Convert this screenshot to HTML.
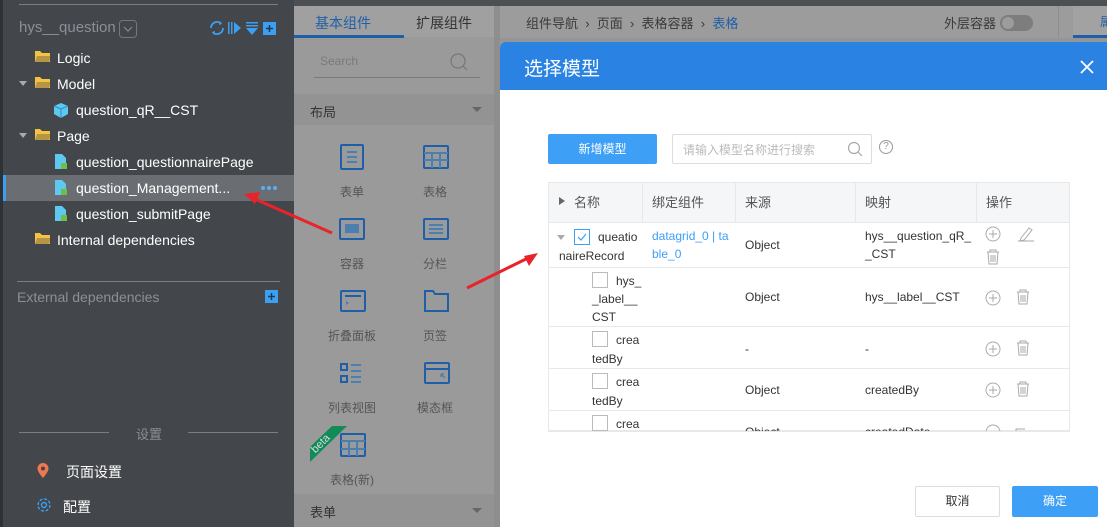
<!DOCTYPE html>
<html><head><meta charset="utf-8"><style>
*{margin:0;padding:0;box-sizing:border-box}
body{width:1107px;height:527px;overflow:hidden;position:relative;font-family:"Liberation Sans","Noto Sans CJK SC",sans-serif;background:#9a9a9a}
.a{position:absolute}
.sb{left:0;top:0;width:294px;height:527px;background:#43464a}
.t{color:#fff;font-size:14px;white-space:nowrap}
.cn{font-family:"Liberation Sans","Noto Sans CJK SC",sans-serif}
.g{color:#555;font-size:12px;white-space:nowrap}
.cell{font-size:12px;color:#333;white-space:nowrap;line-height:18px}
.cb{width:16px;height:16px;border:1px solid #bbb;background:#fff}
.hl{height:1px;background:#e8e8e8}
.vl{width:1px;background:#e8e8e8}
.tri{width:0;height:0;border-left:5px solid transparent;border-right:5px solid transparent;border-top:5px solid #666}
</style></head><body>
<div class="a sb"></div>
<div class="a" style="left:0;top:0;width:3px;height:527px;background:#2f3235"></div>
<div class="a" style="left:19px;top:4px;width:259px;height:1px;background:#7a7e83"></div>
<div class="a t" style="left:19px;top:19px;color:#8a9099;font-size:15px">hys__question</div>
<svg class="a" style="left:119px;top:20px" width="18" height="18"><rect x=".5" y=".5" width="17" height="17" rx="3" fill="none" stroke="#777"/><path d="M5 7l4 4 4-4" fill="none" stroke="#888" stroke-width="1.2"/></svg>
<svg class="a" style="left:208px;top:19px" width="70" height="18" viewBox="0 0 70 18">
<g fill="none" stroke="#3d9ff0" stroke-width="1.8"><path d="M3 9a6 6 0 0 1 10-4.5M15 9a6 6 0 0 1-10 4.5"/></g>
<path d="M12 2l2 3-3 1zM6 16l-2-3 3-1z" fill="#3d9ff0"/>
<rect x="20" y="3" width="1.5" height="12" fill="#3d9ff0"/><rect x="23" y="3" width="1.5" height="12" fill="#3d9ff0"/><path d="M26 3l7 6-7 6z" fill="#3d9ff0"/>
<rect x="38" y="3" width="12" height="1.5" fill="#3d9ff0"/><rect x="38" y="6" width="12" height="1.5" fill="#3d9ff0"/><path d="M38 9h12l-6 7z" fill="#3d9ff0"/>
<rect x="55" y="3" width="13" height="13" fill="#3d9ff0"/><path d="M61.5 6v7M58 9.5h7" stroke="#1b3a5a" stroke-width="1.5"/></svg>
<svg class="a" style="left:0;top:0" width="294" height="260">
<g fill="#f5c242"><path d="M35 51h5l2 2h8v9H35z"/><path d="M35 77h5l2 2h8v9H35z"/><path d="M35 129h5l2 2h8v9H35z"/><path d="M35 233h5l2 2h8v9H35z"/></g>
<g fill="#43464a" opacity=".35"><path d="M37 56h14l-2 6H35z"/><path d="M37 82h14l-2 6H35z"/><path d="M37 134h14l-2 6H35z"/><path d="M37 238h14l-2 6H35z"/></g>
<path d="M19 81h8l-4 5zM19 133h8l-4 5z" fill="#aaa"/>
<path d="M54 106l7-3 7 3v8l-7 4-7-4z" fill="#5ec8f0"/><path d="M54 106l7 3 7-3M61 109v9" stroke="#2c8cc0" fill="none"/>
<g fill="#5ec8f0"><path d="M55 154h7l4 4v11H55z"/><path d="M55 206h7l4 4v11H55z"/></g>
<g fill="#6cc04a"><rect x="61" y="163" width="6" height="6"/><rect x="61" y="215" width="6" height="6"/></g>
</svg>
<div class="a t" style="left:57px;top:50px">Logic</div>
<div class="a t" style="left:57px;top:76px">Model</div>
<div class="a t" style="left:76px;top:102px">question_qR__CST</div>
<div class="a t" style="left:57px;top:128px">Page</div>
<div class="a t" style="left:76px;top:154px">question_questionnairePage</div>
<div class="a" style="left:3px;top:175px;width:291px;height:26px;background:#6a6e73"></div>
<div class="a" style="left:3px;top:175px;width:3px;height:26px;background:#3d9ff0"></div>
<svg class="a" style="left:0;top:175px" width="80" height="26"><path d="M55 5h7l4 4v11H55z" fill="#5ec8f0"/><rect x="61" y="14" width="6" height="6" fill="#6cc04a"/></svg>
<div class="a t" style="left:76px;top:180px">question_Management...</div>
<svg class="a" style="left:260px;top:185px" width="20" height="6"><circle cx="3" cy="3" r="2" fill="#5aaef5"/><circle cx="9" cy="3" r="2" fill="#5aaef5"/><circle cx="15" cy="3" r="2" fill="#5aaef5"/></svg>
<div class="a t" style="left:76px;top:206px">question_submitPage</div>
<div class="a t" style="left:57px;top:232px">Internal dependencies</div>
<div class="a" style="left:17px;top:281px;width:263px;height:1px;background:#7a7e83"></div>
<div class="a t" style="left:17px;top:289px;color:#8a9099">External dependencies</div>
<div class="a" style="left:265px;top:290px;width:13px;height:13px;background:#3d9ff0"></div>
<svg class="a" style="left:265px;top:290px" width="13" height="13"><path d="M6.5 3v7M3 6.5h7" stroke="#1b3a5a" stroke-width="1.5"/></svg>
<div class="a" style="left:19px;top:432px;width:90px;height:1px;background:#7a7e83"></div>
<div class="a" style="left:188px;top:432px;width:90px;height:1px;background:#7a7e83"></div>
<div class="a t" style="left:136px;top:424px;color:#8a9099;font-size:13px">设置</div>
<svg class="a" style="left:36px;top:462px" width="14" height="18"><path d="M7 1a5.5 5.5 0 0 1 5.5 5.5C12.5 10 7 16 7 16S1.5 10 1.5 6.5A5.5 5.5 0 0 1 7 1z" fill="#f07850"/><circle cx="7" cy="6.5" r="2" fill="#43464a"/></svg>
<div class="a t" style="left:66px;top:462px">页面设置</div>
<svg class="a" style="left:36px;top:497px" width="16" height="16"><circle cx="8" cy="8" r="2.5" fill="none" stroke="#3d9ff0" stroke-width="1.4"/><circle cx="8" cy="8" r="6" fill="none" stroke="#3d9ff0" stroke-width="1.4" stroke-dasharray="3 1.7"/></svg>
<div class="a t" style="left:63px;top:497px">配置</div>

<div class="a" style="left:294px;top:0;width:206px;height:6px;background:#4c4f53"></div>
<div class="a" style="left:294px;top:6px;width:200px;height:31px;background:#a0a0a0"></div>
<div class="a cn" style="left:315px;top:13px;font-size:14px;color:#1f5fa8">基本组件</div>
<div class="a cn" style="left:416px;top:13px;font-size:14px;color:#333">扩展组件</div>
<div class="a" style="left:294px;top:35px;width:110px;height:3px;background:#1f5fa8"></div>
<div class="a" style="left:494px;top:6px;width:6px;height:521px;background:#8e8e8e"></div>
<div class="a" style="left:320px;top:54px;font-size:12px;color:#7a7a7a">Search</div>
<div class="a" style="left:314px;top:77px;width:166px;height:1px;background:#7a7a7a"></div>
<svg class="a" style="left:448px;top:51px" width="30" height="24"><circle cx="10" cy="10" r="7" fill="none" stroke="#777" stroke-width="1.2"/><path d="M15 15l4 4" stroke="#777" stroke-width="1.2"/></svg>
<div class="a" style="left:294px;top:94px;width:200px;height:31px;background:#939393"></div>
<div class="a cn" style="left:310px;top:102px;font-size:13px;color:#333">布局</div>
<div class="a tri" style="left:472px;top:107px"></div>
<svg class="a" style="left:294px;top:125px" width="200" height="340" fill="none" stroke="#1f5fa8" stroke-width="2">
<rect x="47" y="20" width="22" height="24" rx="1"/><path d="M53 27h10M53 32h10M53 37h10" stroke="#4a7fb0"/>
<rect x="130" y="21" width="24" height="22" rx="1"/><path d="M130 28h24M130 35h24M138 28v15M146 28v15" stroke="#4a7fb0"/>
<rect x="46" y="94" width="24" height="20" rx="1"/><rect x="51" y="99" width="14" height="9" fill="#4a7fb0" stroke="none"/>
<rect x="130" y="94" width="24" height="20" rx="1"/><path d="M135 100h14M135 104h14M135 108h14" stroke="#4a7fb0"/>
<rect x="47" y="166" width="24" height="20" rx="1"/><path d="M51 171h16"/><path d="M52 176l3 2-3 2z" fill="#4a7fb0" stroke="none"/>
<path d="M131 166h8l2 3h13v17h-23z"/>
<rect x="47" y="239" width="6" height="6"/><rect x="47" y="251" width="6" height="6"/><path d="M57 240h10M57 246h10M57 252h10M57 257h10" stroke="#4a7fb0"/>
<rect x="131" y="238" width="24" height="20" rx="1"/><path d="M131 244h24"/><path d="M147 249l4 4M147 249h3M147 249v3" stroke="#4a7fb0" stroke-width="1.5"/>
<rect x="47" y="309" width="24" height="22" rx="1"/><path d="M47 316h24M47 324h24M55 316v15M63 316v15" stroke="#4a7fb0"/>
</svg>
<div class="a cn g" style="left:340px;top:183px">表单</div>
<div class="a cn g" style="left:423px;top:183px">表格</div>
<div class="a cn g" style="left:340px;top:255px">容器</div>
<div class="a cn g" style="left:423px;top:255px">分栏</div>
<div class="a cn g" style="left:328px;top:327px">折叠面板</div>
<div class="a cn g" style="left:423px;top:327px">页签</div>
<div class="a cn g" style="left:328px;top:399px">列表视图</div>
<div class="a cn g" style="left:417px;top:399px">模态框</div>
<svg class="a" style="left:310px;top:425px" width="40" height="40"><path d="M0 37L0 22 22 1 37 1z" fill="#128a5a"/><text x="13" y="21" text-anchor="middle" transform="rotate(-45 13 21)" fill="#ddd" font-size="11" font-family="Liberation Sans">beta</text></svg>
<div class="a cn g" style="left:330px;top:471px">表格(新)</div>
<div class="a" style="left:294px;top:494px;width:200px;height:33px;background:#939393"></div>
<div class="a cn" style="left:310px;top:502px;font-size:13px;color:#333">表单</div>
<div class="a tri" style="left:472px;top:508px"></div>

<div class="a" style="left:500px;top:0;width:607px;height:6px;background:#4c4f53"></div>
<div class="a" style="left:500px;top:6px;width:607px;height:32px;background:#9c9c9c"></div>
<div class="a" style="left:500px;top:38px;width:607px;height:4px;background:#959595"></div>
<div class="a cn" style="left:526px;top:13px;font-size:13px;color:#3a3a3a;white-space:nowrap">组件导航 &nbsp;›&nbsp; 页面 &nbsp;›&nbsp; 表格容器 &nbsp;›&nbsp; <span style="color:#1f5fa8">表格</span></div>
<div class="a cn" style="left:944px;top:13px;font-size:13px;color:#3a3a3a">外层容器</div>
<div class="a" style="left:1000px;top:15px;width:33px;height:16px;border-radius:8px;background:#7d7d7d"></div>
<div class="a" style="left:1002px;top:17px;width:12px;height:12px;border-radius:6px;background:#9c9c9c"></div>
<div class="a" style="left:1058px;top:6px;width:1px;height:32px;background:#8e8e8e"></div>
<div class="a" style="left:1073px;top:6px;width:34px;height:32px;background:#a2a2a2"></div>
<div class="a" style="left:1073px;top:35px;width:34px;height:3px;background:#1f5fa8"></div>
<div class="a cn" style="left:1100px;top:13px;font-size:12px;color:#1f5fa8">属</div>

<div class="a" style="left:500px;top:42px;width:607px;height:485px;background:#fff;border-top-left-radius:5px;overflow:hidden">
 <div class="a" style="left:0;top:0;width:607px;height:48px;background:#2a83e2"></div>
 <div class="a cn" style="left:24px;top:12px;font-size:19px;color:#fff">选择模型</div>
 <svg class="a" style="left:580px;top:18px" width="14" height="14"><path d="M1 1l12 12M13 1L1 13" stroke="#fff" stroke-width="1.8"/></svg>
</div>
<div class="a cn" style="left:548px;top:134px;width:109px;height:30px;background:#3d9ff5;border-radius:2px;color:#fff;font-size:12px;text-align:center;line-height:30px">新增模型</div>
<div class="a" style="left:672px;top:134px;width:200px;height:30px;border:1px solid #ddd;border-radius:2px"></div>
<div class="a cn" style="left:683px;top:141px;font-size:12px;color:#bbb">请输入模型名称进行搜索</div>
<svg class="a" style="left:847px;top:141px" width="18" height="18"><circle cx="7" cy="7" r="5.5" fill="none" stroke="#aaa" stroke-width="1.2"/><path d="M11 11l4 4" stroke="#aaa" stroke-width="1.2"/></svg>
<div class="a" style="left:879px;top:140px;width:14px;height:14px;border:1px solid #999;border-radius:50%;font-size:10px;color:#999;text-align:center;line-height:12px">?</div>

<div class="a" style="left:548px;top:182px;width:522px;height:249px;border:1px solid #e8e8e8;overflow:hidden;background:#fff">
 <div class="a" style="left:0;top:0;width:522px;height:40px;background:#f5f6f8"></div>
</div>
<div class="a vl" style="left:642px;top:182px;height:40px"></div>
<div class="a vl" style="left:735px;top:182px;height:40px"></div>
<div class="a vl" style="left:855px;top:182px;height:40px"></div>
<div class="a vl" style="left:976px;top:182px;height:40px"></div>
<div class="a hl" style="left:548px;top:222px;width:522px"></div>
<div class="a hl" style="left:548px;top:267px;width:522px"></div>
<div class="a hl" style="left:548px;top:326px;width:522px"></div>
<div class="a hl" style="left:548px;top:368px;width:522px"></div>
<div class="a hl" style="left:548px;top:410px;width:522px"></div>
<div class="a" style="left:559px;top:197px;width:0;height:0;border-top:4px solid transparent;border-bottom:4px solid transparent;border-left:6px solid #666"></div>
<div class="a cn cell" style="left:574px;top:194px;font-size:13px;color:#555">名称</div>
<div class="a cn cell" style="left:652px;top:194px;font-size:13px;color:#555">绑定组件</div>
<div class="a cn cell" style="left:745px;top:194px;font-size:13px;color:#555">来源</div>
<div class="a cn cell" style="left:865px;top:194px;font-size:13px;color:#555">映射</div>
<div class="a cn cell" style="left:986px;top:194px;font-size:13px;color:#555">操作</div>
<div class="a" style="left:557px;top:235px;width:0;height:0;border-left:4px solid transparent;border-right:4px solid transparent;border-top:5px solid #aaa"></div>
<div class="a cb" style="left:574px;top:229px;border-color:#3d9ff5"></div>
<svg class="a" style="left:574px;top:229px" width="16" height="16"><path d="M4 8l3 3 5-6" fill="none" stroke="#3d9ff5" stroke-width="1.2"/></svg>
<div class="a cell" style="left:598px;top:228px">queatio</div>
<div class="a cell" style="left:559px;top:247px">naireRecord</div>
<div class="a cell" style="left:652px;top:227px;color:#3d9ff5">datagrid_0 | ta</div>
<div class="a cell" style="left:652px;top:245px;color:#3d9ff5">ble_0</div>
<div class="a cell" style="left:745px;top:236px">Object</div>
<div class="a cell" style="left:865px;top:227px">hys__question_qR_</div>
<div class="a cell" style="left:865px;top:245px">_CST</div>
<div class="a cb" style="left:592px;top:272px"></div>
<div class="a cell" style="left:616px;top:272px">hys_</div>
<div class="a cell" style="left:592px;top:290px">_label__</div>
<div class="a cell" style="left:592px;top:308px">CST</div>
<div class="a cell" style="left:745px;top:288px">Object</div>
<div class="a cell" style="left:865px;top:288px">hys__label__CST</div>
<div class="a cb" style="left:592px;top:331px"></div>
<div class="a cell" style="left:616px;top:331px">crea</div>
<div class="a cell" style="left:592px;top:350px">tedBy</div>
<div class="a cell" style="left:745px;top:340px">-</div>
<div class="a cell" style="left:865px;top:340px">-</div>
<div class="a cb" style="left:592px;top:373px"></div>
<div class="a cell" style="left:616px;top:373px">crea</div>
<div class="a cell" style="left:592px;top:392px">tedBy</div>
<div class="a cell" style="left:745px;top:381px">Object</div>
<div class="a cell" style="left:865px;top:381px">createdBy</div>
<div class="a" style="left:548px;top:410px;width:522px;height:21px;overflow:hidden">
 <div class="a cb" style="left:44px;top:5px"></div>
 <div class="a cell" style="left:68px;top:5px">crea</div>
 <div class="a cell" style="left:197px;top:13px">Object</div>
 <div class="a cell" style="left:317px;top:13px">createdDate</div>
 <svg class="a" style="left:437px;top:14px" width="40" height="10"><circle cx="8" cy="8" r="7" fill="none" stroke="#aaa"/><rect x="31" y="5" width="10" height="4" fill="none" stroke="#aaa"/></svg>
</div>
<div class="a" style="left:548px;top:431px;width:522px;height:1px;background:#e8e8e8"></div>
<svg class="a" style="left:980px;top:222px" width="90" height="190" fill="none" stroke="#aaa" stroke-width="1">
<circle cx="13" cy="12" r="7"/><path d="M13 8v8M9 12h8"/>
<path d="M38 19h16M41 16l8-10 3 2-8 10-4 1z"/>
<path d="M7 30h12M10 30v-2h6v2M8 30l1 12h8l1-12M11 33v7M13 33v7M15 33v7"/>
<circle cx="13" cy="76" r="7"/><path d="M13 72v8M9 76h8"/>
<path d="M37 70h12M40 70v-2h6v2M38 70l1 12h8l1-12M41 73v7M43 73v7M45 73v7"/>
<circle cx="13" cy="127" r="7"/><path d="M13 123v8M9 127h8"/>
<path d="M37 121h12M40 121v-2h6v2M38 121l1 12h8l1-12M41 124v7M43 124v7M45 124v7"/>
<circle cx="13" cy="168" r="7"/><path d="M13 164v8M9 168h8"/>
<path d="M37 162h12M40 162v-2h6v2M38 162l1 12h8l1-12M41 165v7M43 165v7M45 165v7"/>
</svg>
<div class="a cn" style="left:915px;top:486px;width:85px;height:31px;border:1px solid #ddd;border-radius:2px;font-size:12px;color:#333;text-align:center;line-height:29px">取消</div>
<div class="a cn" style="left:1012px;top:486px;width:86px;height:31px;background:#3d9ff5;border-radius:2px;font-size:12px;color:#fff;text-align:center;line-height:31px">确定</div>

<svg class="a" style="left:0;top:0" width="1107" height="527">
<path d="M332 233L255 199" stroke="#e8232a" stroke-width="3"/><path d="M244 194l16-2-5 12z" fill="#e8232a"/>
<path d="M467 288L528 258" stroke="#e8232a" stroke-width="3"/><path d="M538 253l-9 13-5-10z" fill="#e8232a"/>
</svg>
</body></html>
